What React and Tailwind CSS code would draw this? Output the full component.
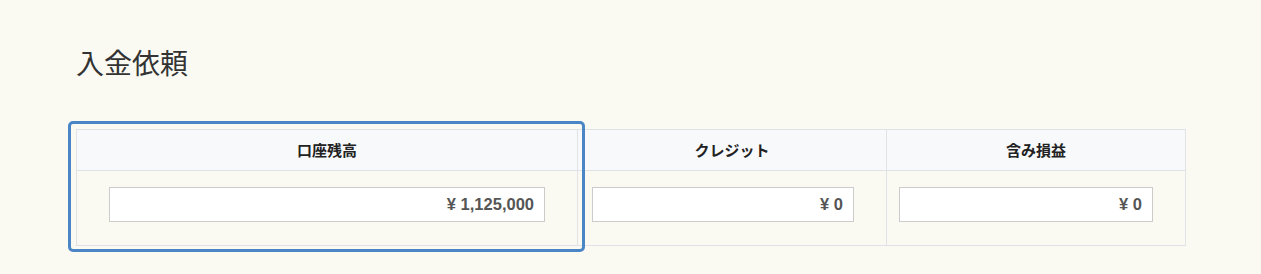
export default function App() {
  const cols = [
    { label: "口座残高", value: "¥ 1,125,000", ml: "ml-[32px]", w: "w-[436px]" },
    { label: "クレジット", value: "¥ 0", ml: "ml-[14px]", w: "w-[262px]" },
    { label: "含み損益", value: "¥ 0", ml: "ml-[12px]", w: "w-[254px]" },
  ];
  return (
    <div
      className="min-h-[274px] w-full bg-[#fafaf3] pl-[76px] pt-[45px]"
      style={{ fontFamily: '"Noto Sans CJK JP", "Noto Sans", sans-serif' }}
    >
      <h1 className="text-[28px] leading-[34px] font-normal text-[#333333]">入金依頼</h1>
      <div className="relative mt-[50px] w-[1110px]">
        <div className="grid grid-cols-[501px_309px_299px] border-l border-t border-[#dfe3e7]">
          {cols.map((c) => (
            <div
              key={c.label}
              className="flex h-[41px] items-center justify-center border-r border-b border-[#dfe3e7] bg-[#f7f9fb] text-[15px] font-bold text-[#222222]"
            >
              {c.label}
            </div>
          ))}
          {cols.map((c) => (
            <div key={c.label + "v"} className="h-[75px] border-r border-b border-[#dfe3e7] pt-[16px]">
              <div
                className={`${c.ml} ${c.w} flex h-[35px] items-center justify-end border border-[#cccccc] bg-white pr-[10px] text-[16.5px] font-bold text-[#555555]`}
                style={{ fontFamily: '"Liberation Sans", Arial, sans-serif' }}
              >
                {c.value}
              </div>
            </div>
          ))}
        </div>
        <div className="pointer-events-none absolute left-[-8px] top-[-8px] h-[131px] w-[517px] rounded-[5px] border-[3px] border-[#4a86c6]" />
      </div>
    </div>
  );
}
